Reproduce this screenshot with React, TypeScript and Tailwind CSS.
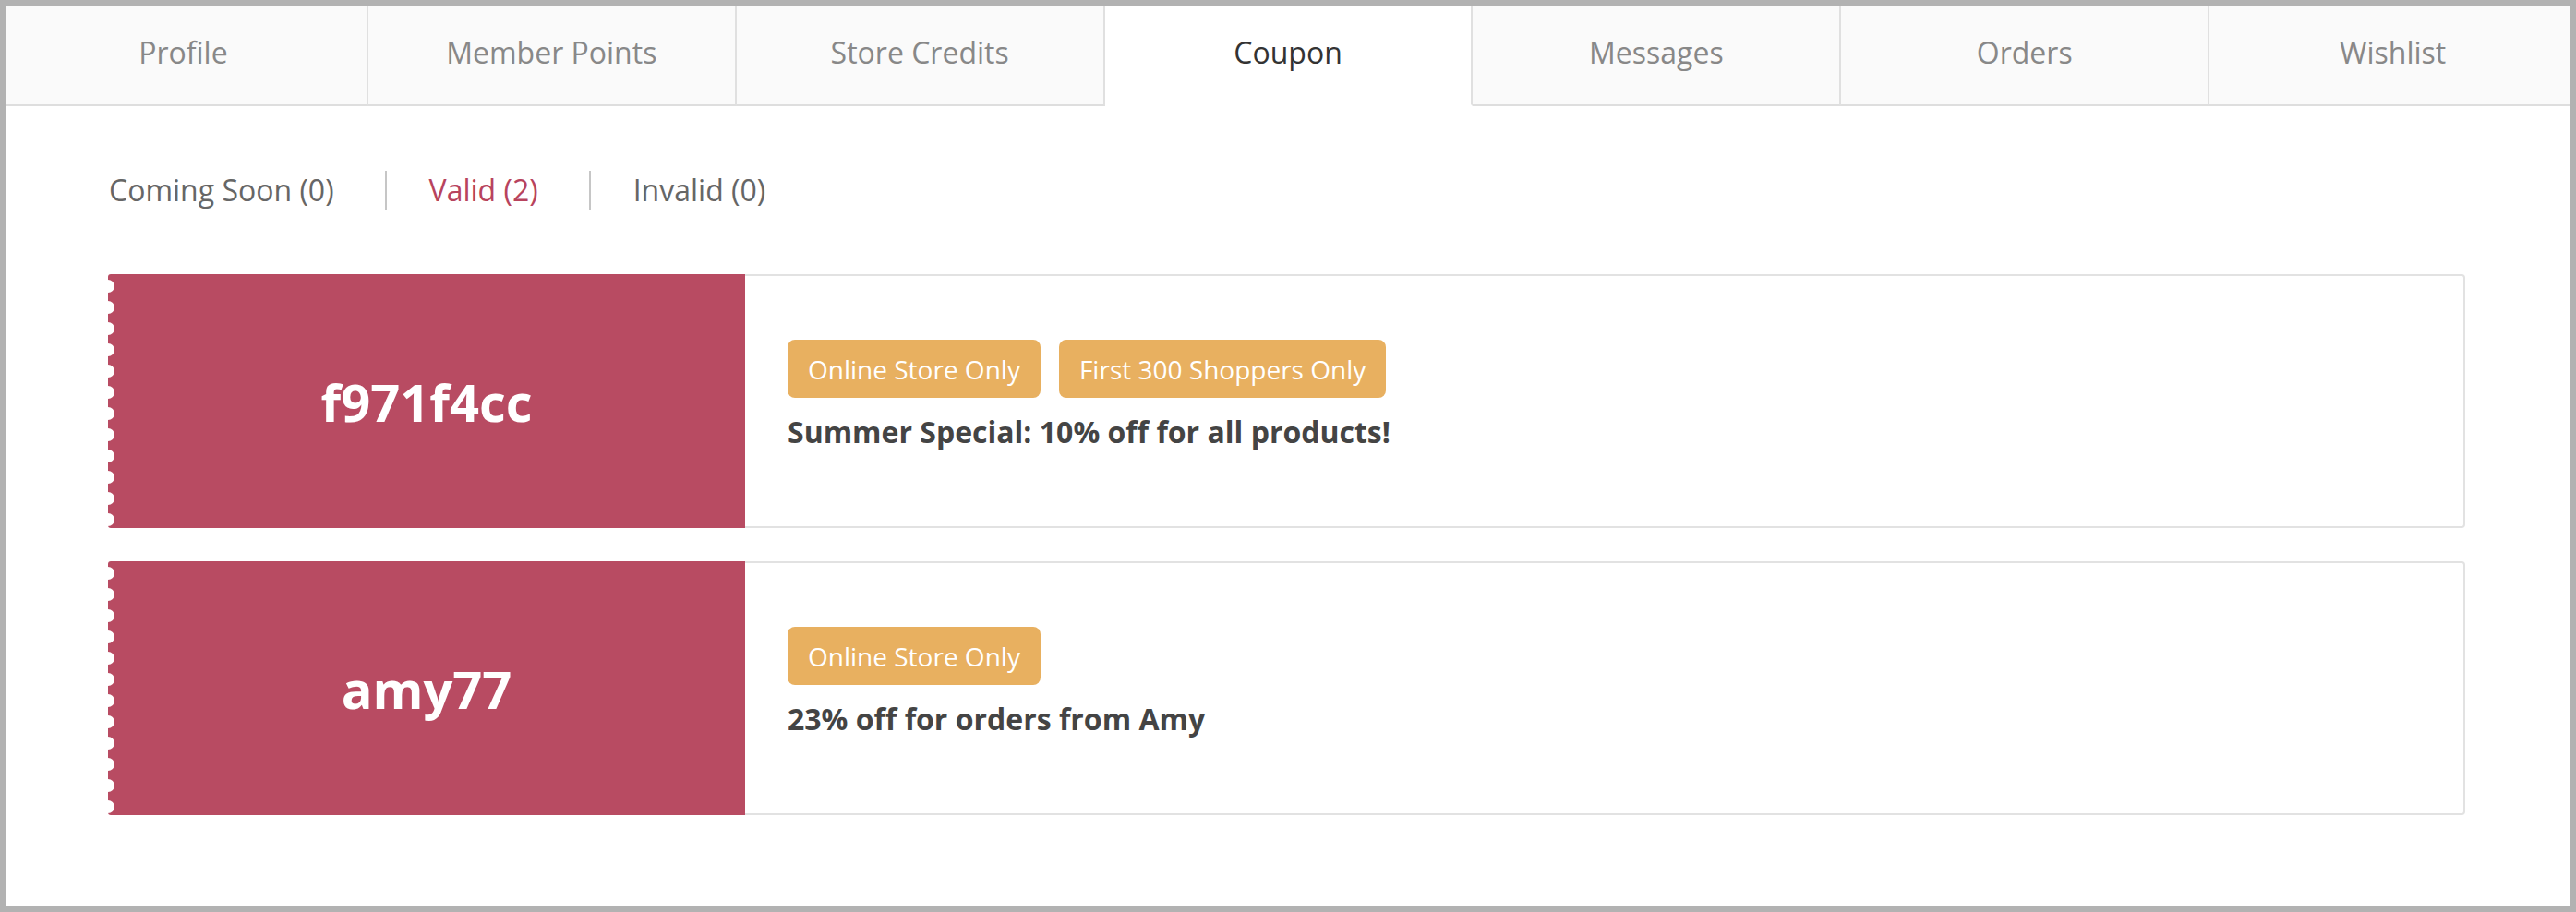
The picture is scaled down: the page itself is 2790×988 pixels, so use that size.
const TABS = ["Profile", "Member Points", "Store Credits", "Coupon", "Messages", "Orders", "Wishlist"];

const FILTERS = [
  { label: "Coming Soon (0)", active: false },
  { label: "Valid (2)", active: true },
  { label: "Invalid (0)", active: false },
];

type Coupon = {
  code: string;
  tags: string[];
  title: string;
};

const COUPONS: Coupon[] = [
  {
    code: "f971f4cc",
    tags: ["Online Store Only", "First 300 Shoppers Only"],
    title: "Summer Special: 10% off for all products!",
  },
  {
    code: "amy77",
    tags: ["Online Store Only"],
    title: "23% off for orders from Amy",
  },
];

function Scallops() {
  return (
    <div className="absolute left-0 top-[6px] flex flex-col gap-[9px]">
      {Array.from({ length: 12 }).map((_, i) => (
        <span key={i} className="-ml-[7px] block h-[14px] w-[14px] rounded-full bg-white" />
      ))}
    </div>
  );
}

function CouponCard({ coupon }: { coupon: Coupon }) {
  return (
    <div className="flex h-[275px]">
      <div className="relative flex w-[690px] shrink-0 items-center justify-center overflow-hidden rounded-l-[3px] bg-[#b84b62]">
        <Scallops />
        <span className="text-[56px] font-bold leading-none text-white">{coupon.code}</span>
      </div>
      <div className="flex-1 rounded-r-[4px] border-2 border-l-0 border-[#e2e2e2] bg-white pl-[46px] pt-[69px]">
        <div className="flex gap-5">
          {coupon.tags.map((tag) => (
            <span
              key={tag}
              className="flex h-[63px] items-center rounded-lg bg-[#e8b060] px-[22px] text-[28px] text-white"
            >
              {tag}
            </span>
          ))}
        </div>
        <p className="mt-[13px] text-[32px] font-bold leading-[48px] text-[#444]">{coupon.title}</p>
      </div>
    </div>
  );
}

export default function App() {
  return (
    <div className="relative h-[988px] w-full bg-white font-['Open_Sans',sans-serif]">
      <div className="flex h-[115px]">
        {TABS.map((tab, i) => {
          const active = tab === "Coupon";
          return (
            <div
              key={tab}
              className={`flex flex-1 items-center justify-center text-[32px] ${
                i < TABS.length - 1 ? "border-r-2 border-r-[#e0e0e0]" : ""
              } ${
                active
                  ? "border-b-2 border-b-white bg-white text-[#333]"
                  : "border-b-2 border-b-[#dedede] bg-[#fafafa] text-[#888]"
              }`}
            >
              {tab}
            </div>
          );
        })}
      </div>

      <div className="pl-[117px] pr-[120px]">
        <div className="mt-[70px] flex items-center pl-px">
          {FILTERS.map((item, i) => (
            <div
              key={item.label}
              className={`flex h-[42px] items-center text-[32px] ${
                i > 0 ? "border-l-2 border-[#c6c6c6] pl-[46px]" : ""
              } ${i < FILTERS.length - 1 ? "pr-[55px]" : ""} ${
                item.active ? "text-[#b8435d]" : "text-[#666]"
              }`}
            >
              {item.label}
            </div>
          ))}
        </div>

        <div className="mt-[70px] flex flex-col gap-[36px]">
          {COUPONS.map((c) => (
            <CouponCard key={c.code} coupon={c} />
          ))}
        </div>
      </div>

      {/* window frame drawn over the page edge */}
      <div className="pointer-events-none absolute inset-0 border-[7px] border-[#b2b2b2]" />
    </div>
  );
}
